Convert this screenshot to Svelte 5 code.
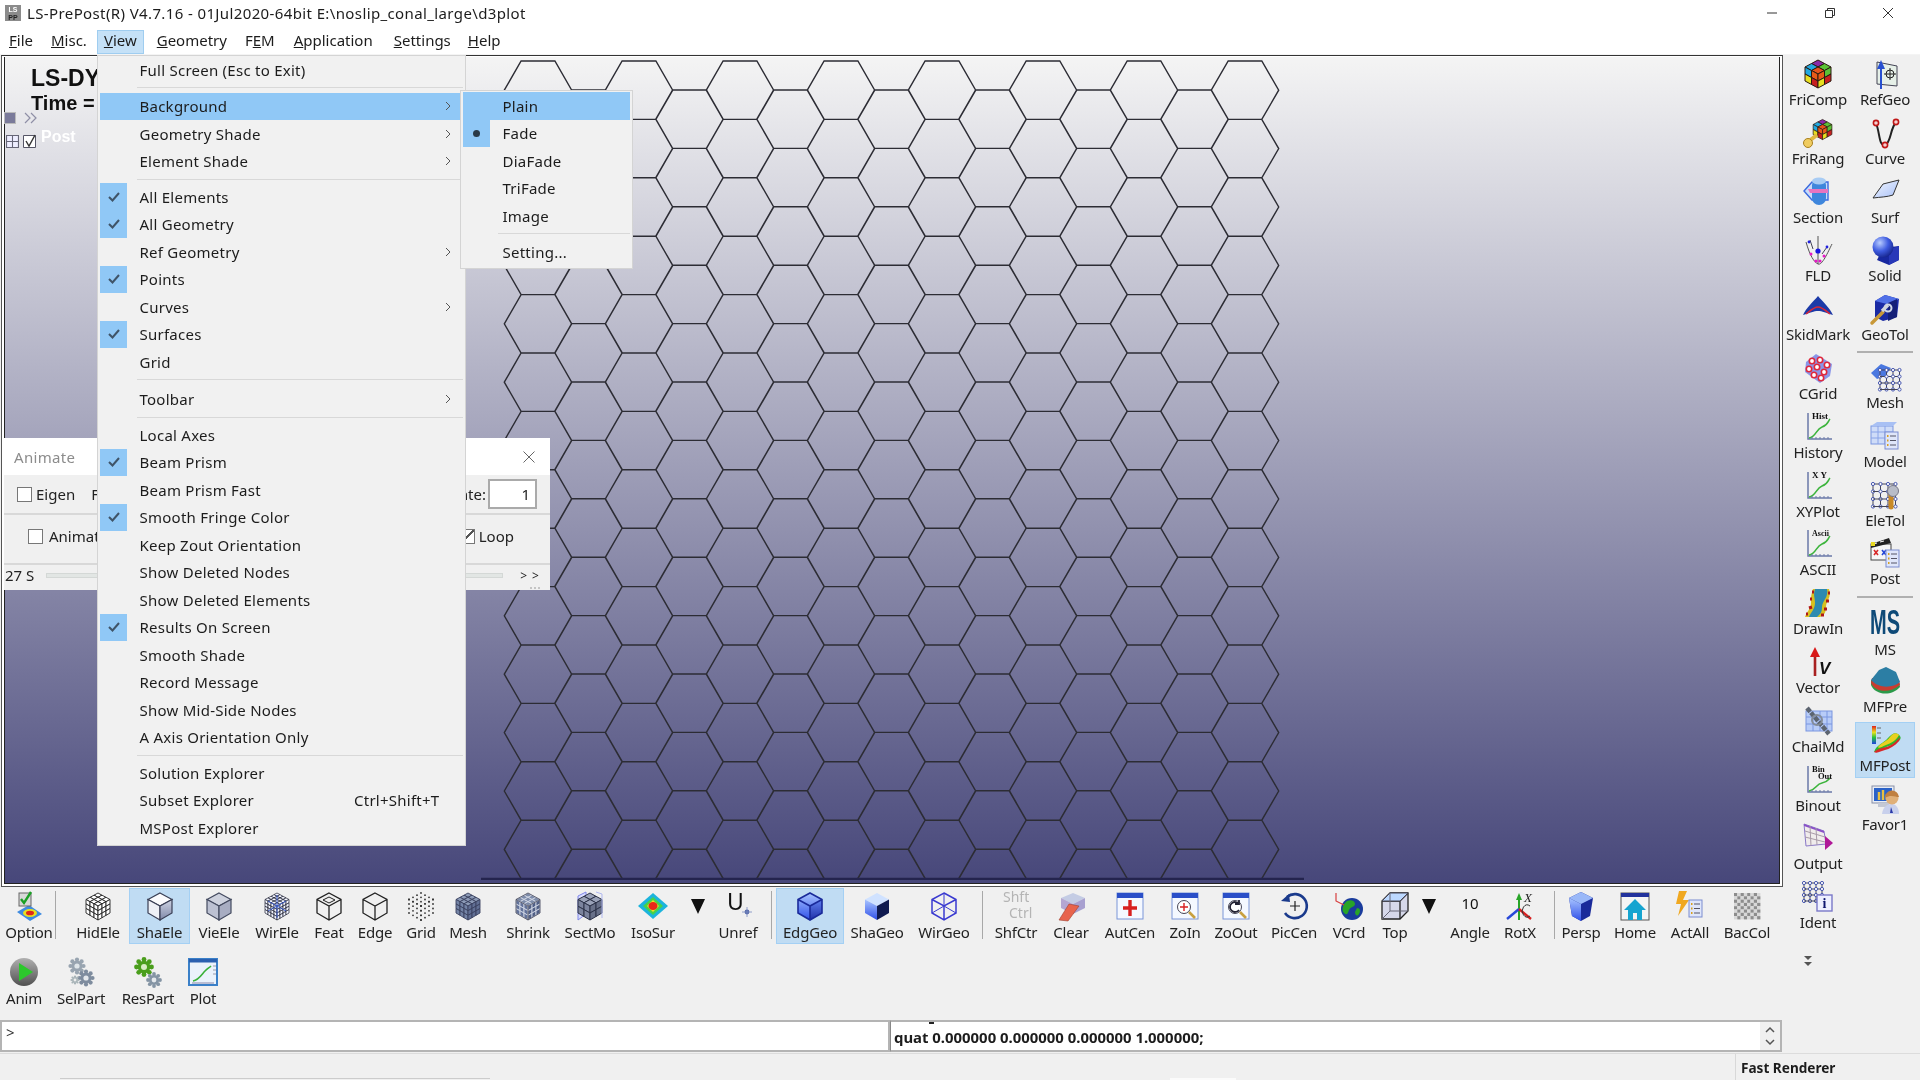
<script>
const lerp=(a,b,t)=>[a[0]+(b[0]-a[0])*t,a[1]+(b[1]-a[1])*t];
const bil=(a,b,c,d,u,v)=>lerp(lerp(a,b,u),lerp(d,c,u),v);
function face(a,b,c,d,n,fills,stroke,sw=1){let s='';for(let i=0;i<n;i++)for(let j=0;j<n;j++){const f=Array.isArray(fills)?fills[(i+j*n)%fills.length]:fills;const p=[bil(a,b,c,d,i/n,j/n),bil(a,b,c,d,(i+1)/n,j/n),bil(a,b,c,d,(i+1)/n,(j+1)/n),bil(a,b,c,d,i/n,(j+1)/n)].map(q=>q[0].toFixed(1)+','+q[1].toFixed(1)).join(' ');s+=`<polygon points="${p}" fill="${f}" stroke="${stroke}" stroke-width="${sw}"/>`;}return s;}
const T=[16,3],R=[28,9.5],C=[16,16],L=[4,9.5],RB=[28,23],B=[16,30],LB=[4,23];
const gridCube=(n,f,st,sw=1)=>face(T,R,C,L,n,f[0],st,sw)+face(L,C,B,LB,n,f[1],st,sw)+face(C,R,RB,B,n,f[2],st,sw);
const cubeLines=(st,sw=1.3)=>`<path d="M16 3 28 9.5V23L16 30 4 23V9.5ZM4 9.5 16 16 28 9.5M16 16V30" fill="none" stroke="${st}" stroke-width="${sw}"/>`;
const win=(inner,bar='#2a4fc8')=>`<rect x="3" y="3" width="26" height="26" fill="#f4f8ff" stroke="#7a96d8"/><rect x="3" y="3" width="26" height="5" fill="${bar}"/>${inner}`;
const plot=(label,size=9)=>`<path d="M6 2V28H30" fill="none" stroke="#6a78a8" stroke-width="1.5"/><path d="M7 27C14 26 14 18 20 16S26 10 28 8" fill="none" stroke="#3cb43c" stroke-width="1.6"/><path d="M10 26v2M14 26v2M18 26v2M22 26v2M26 26v2" stroke="#6a78a8"/><text x="10" y="8" font-family="Liberation Serif,serif" font-weight="700" font-size="${size}" fill="#111">${label}</text>`;
const list=(x,y)=>`<rect x="${x}" y="${y}" width="13" height="17" fill="#dfe6fa" stroke="#7a8cd0"/><path d="M${x+5} ${y+4}h6M${x+5} ${y+8.5}h6M${x+5} ${y+13}h6" stroke="#556"/><path d="M${x+2} ${y+4}h1.5M${x+2} ${y+8.5}h1.5M${x+2} ${y+13}h1.5" stroke="#d8a020" stroke-width="2"/>`;
const gridDots=(x,y,n,s)=>{let o='';for(let i=0;i<=n;i++){o+=`<path d="M${x} ${y+i*s}h${n*s}M${x+i*s} ${y}v${n*s}" stroke="#445"/>`;for(let j=0;j<=n;j++)o+=`<circle cx="${x+i*s}" cy="${y+j*s}" r="1.6" fill="#fff" stroke="#4858b0"/>`;}return o;};
const rubik=(o=0)=>face([16,2+o],[29,9+o],[16,16+o],[3,9+o],2,['#8a2aa8','#5bc236','#22a8e0','#e8541c'],'#2a1a10',1)+face([3,9+o],[16,16+o],[16,30+o],[3,23+o],2,['#20a8e0','#e85a18','#e8e020','#c82020'],'#2a1a10',1)+face([16,16+o],[29,9+o],[29,23+o],[16,30+o],2,['#e85a18','#5bc236','#e8e020','#c82020'],'#2a1a10',1);
const gear=(x,y,r,c,h)=>{let s='';for(let i=0;i<8;i++){const a=i*Math.PI/4;s+=`<circle cx="${(x+Math.cos(a)*r).toFixed(1)}" cy="${(y+Math.sin(a)*r).toFixed(1)}" r="${(r*.32).toFixed(1)}" fill="${c}"/>`;}return s+`<circle cx="${x}" cy="${y}" r="${r*.85}" fill="${c}"/><circle cx="${x}" cy="${y}" r="${r*.4}" fill="${h}"/>`;};
const dots=(()=>{let s='';for(const [a,b,c,d] of [[T,R,C,L],[L,C,B,LB],[C,R,RB,B]])for(let i=0;i<=3;i++)for(let j=0;j<=3;j++){const p=bil(a,b,c,d,i/3,j/3);s+=`<circle cx="${p[0].toFixed(1)}" cy="${p[1].toFixed(1)}" r=".9" fill="#333"/>`;}return s;})();
const icons={
option:`<path d="M4 22 16 15 29 24 17 31Z" fill="#3f8be0"/><ellipse cx="17" cy="23" rx="7" ry="4" fill="#e8e020"/><ellipse cx="17" cy="23" rx="4" ry="2.3" fill="#e02818"/><rect x="6" y="3" width="12" height="13" fill="#d8d8d8" stroke="#666"/><path d="M8 9l3 4 7-11" fill="none" stroke="#1aa024" stroke-width="2.4"/>`,
hidele:gridCube(3,['#fff','#fff','#fff'],'#222',.9),
shaele:gridCube(1,['#fbfbfd','#eef0f6','url(#sh)'],'#3a3f55',1.2),
viele:gridCube(1,['#ced2de','#bcc1d2','#a8adc2'],'#444b60',1.2),
wirele:gridCube(4,['#f4f6ff','#f4f6ff','#f4f6ff'],'#1c2030',.7)+`<path d="M16 5V28M7 11 25 21M25 11 7 21" stroke="#3a5ac8" stroke-width="1"/>`,
feat:cubeLines('#222')+`<path d="M16 7 22 10 16 13 10 10Z" fill="none" stroke="#222"/>`,
edge:cubeLines('#222'),
grid:dots,
mesh:gridCube(3,['#8c9ab6','#7484a6','#616f94'],'#3a4260',.9),
shrink:gridCube(3,['#7d8caa','#62729a','#505f86'],'#d0d6e4',.9)+cubeLines('#334',.7),
sectmo:`<path d="M4 6 12 2V24L4 30Z" fill="#d8dcff" stroke="#8088e8"/>`+gridCube(2,['#9aa2b8','#7c849e','#687088'],'#2c3248')+`<path d="M22 2 28 4V28" fill="none" stroke="#b0b8f0"/>`,
isosur:`<path d="M1 16 16 3 31 16 16 29Z" fill="#1cb4dc"/><path d="M6 16 16 7 26 16 16 25Z" fill="#46d24a"/><path d="M10 16 16 10 22 16 16 22Z" fill="#f0e020"/><ellipse cx="16" cy="16" rx="4.5" ry="4" fill="#e82818"/>`,
drop:`<path d="M9 9H23L16 24Z" fill="#111"/>`,
unref:`<text x="5" y="20" font-family="Noto Sans,sans-serif" font-size="23" fill="#111">U</text><circle cx="25" cy="22" r="2.4" fill="#5468a8"/><path d="M25 17v10M20 22h10" stroke="#7a8ac0" stroke-width=".8"/>`,
edggeo:`<path d="M16 3 28 9.5V23L16 30 4 23V9.5Z" fill="url(#bl)"/><path d="M16 16 28 9.5V23L16 30Z" fill="url(#bd)"/>`+cubeLines('#1a2a9a',1.6),
shageo:`<path d="M4 9.5 16 3 28 9.5 16 16Z" fill="#d0e2ff"/><path d="M4 9.5 16 16V30L4 23Z" fill="url(#bl)"/><path d="M16 16 28 9.5V23L16 30Z" fill="#101a50"/>`,
wirgeo:cubeLines('#3a3ad0',1.5)+`<path d="M4 23 16 16M16 16 28 23M16 3V16" stroke="#3a3ad0" stroke-width="1"/>`,
shfctr:`<text x="3" y="12" font-family="Noto Sans,sans-serif" font-size="14" fill="#b4b4b4">Shft</text><text x="9" y="28" font-family="Noto Sans,sans-serif" font-size="14" fill="#b4b4b4">Ctrl</text>`,
clear:`<path d="M6 8 18 3 30 8 18 14Z" fill="#c4cce4"/><path d="M6 8 18 14V24L6 18Z" fill="#9a86c4" opacity=".7"/><path d="M18 14 30 8V18L18 24Z" fill="#a8a0d0"/><path d="M4 30 14 14 24 16 13 31Z" fill="#e8644c" stroke="#a04030" stroke-width=".6"/>`,
autcen:win(`<path d="M16 10v16M9 18h14" stroke="#d82020" stroke-width="3.4"/>`),
zoin:win(`<circle cx="15" cy="17" r="6.5" fill="#fff" stroke="#445"/><path d="M15 13v8M11 17h8" stroke="#d82020" stroke-width="1.4"/><path d="M20 22l6 6" stroke="#c8a040" stroke-width="2.6"/>`),
zoout:win(`<circle cx="15" cy="17" r="6.5" fill="#fff" stroke="#445"/><path d="M19 14a5 5 0 1 0 0 6M19 10v4h-4" fill="none" stroke="#223" stroke-width="1.8"/><path d="M20 22l6 6" stroke="#c8a040" stroke-width="2.6"/>`),
piccen:`<path d="M9 7a12 12 0 1 1-2 16" fill="none" stroke="#1a3a8c" stroke-width="2.6"/><path d="M3 11 11 4 12 12Z" fill="#1a3a8c"/><path d="M17 11v10M12 16h10" stroke="#222" stroke-width="1.2"/>`,
vcrd:`<circle cx="19" cy="19" r="11" fill="#1a3c9c"/><path d="M14 11c4-2 8 0 8 3s-5 3-6 6-2 6-5 3-1-9 3-12ZM24 18c3 0 4 3 2 6s-4 1-4-2Z" fill="#28a428"/><path d="M3 3v8l8 4M11 15 3 11" fill="none" stroke="#d84040" stroke-width="1.2"/>`,
top:`<path d="M3 11 11 3H29V21L21 29H3Z" fill="#d6d8ea" stroke="#222" stroke-width="1.3"/><path d="M3 11H21V29M21 11 29 3" fill="none" stroke="#222" stroke-width="1.3"/><path d="M3 11 11 3H29L21 11Z" fill="#bcd8ff" stroke="#445"/><path d="M11 3V21H29M11 21 3 29" fill="none" stroke="#667"/>`,
ten:`<text x="16" y="19" text-anchor="middle" font-family="Noto Sans,sans-serif" font-size="15" fill="#111">10</text>`,
rotx:`<path d="M15 30V8" stroke="#28a428" stroke-width="2"/><path d="M15 3l-3 7h6Z" fill="#28a428"/><path d="M15 19 3 29" stroke="#2848d8" stroke-width="2.4"/><path d="M15 19 27 29" stroke="#d82020" stroke-width="2.4"/><text x="20" y="12" font-family="Liberation Serif,serif" font-style="italic" font-size="13" fill="#222">X</text><path d="M26 16a5 6 0 1 0 0 10" fill="none" stroke="#333"/>`,
persp:`<path d="M16 2 28 8 25 26 16 31 7 26 4 8Z" fill="#1a2a9a"/><path d="M4 8 16 2 28 8 16 14Z" fill="#9ab8f8"/><path d="M4 8 16 14V31L7 26Z" fill="url(#bl)"/>`,
home:`<rect x="2" y="3" width="28" height="27" fill="#f4f4f4" stroke="#555"/><rect x="2" y="3" width="28" height="4" fill="#22329c"/><path d="M16 9 5 20H9V30H14V23H18V30H23V20H27Z" fill="#16a4d0"/>`,
actall:`<path d="M13 1H5L2 14H7L4 26 15 10H9Z" fill="#f0a820"/>`+list(15,10),
baccol:(()=>{let s='';for(let i=0;i<8;i++)for(let j=0;j<8;j++)s+=`<rect x="${3+i*3.3}" y="${3+j*3.3}" width="3.3" height="3.3" fill="${(i+j)%2==0?'#8d8d8d':'#d8d8d8'}"/>`;return s;})(),
anim:`<circle cx="16" cy="16" r="14" fill="url(#gb)"/><path d="M11 7 25 16 11 25Z" fill="#2cc82c"/>`,
selpart:gear(12,10,6.5,'#98a4b0','#dfe6ea')+gear(21,22,6.5,'#7e8c9e','#e4e8ec')+gear(10,24,3.5,'#a8b4b8','#eee'),
respart:gear(12,11,7.5,'#4a9e1c','#d8ecc4')+gear(22,24,6,'#8494a4','#e4e8ec'),
plotw:`<rect x="2" y="3" width="28" height="26" fill="#eaf2fb" stroke="#3a80c8" stroke-width="2"/><rect x="2" y="3" width="28" height="3.5" fill="#2a60b0"/><path d="M6 25C12 24 15 18 18 15S22 12 24 10" fill="none" stroke="#38b038" stroke-width="1.6"/><path d="M5 27H27" stroke="#88a"/><path d="M26 10h3M26 14h3M26 18h3" stroke="#99a"/>`,
fricomp:rubik(),
refgeo:`<path d="M8 4 28 8V28L8 26Z" fill="#e6f0e8" stroke="#445"/><path d="M12 31V8" stroke="#2850d0" stroke-width="2"/><path d="M12 2 8 11H16Z" fill="#2850d0"/><circle cx="21" cy="16" r="4" fill="none" stroke="#222"/><path d="M21 10v12M15 16h12" stroke="#222"/>`,
frirang:`<g transform="translate(9 1) scale(.72)">${rubik()}</g><path d="M3 27l12-9" stroke="#e0b840" stroke-width="4"/><circle cx="6" cy="26" r="4.5" fill="#f0cc60" stroke="#a88020"/>`,
curve:`<path d="M7 6C11 16 10 30 16 28S21 12 27 5" fill="none" stroke="#222" stroke-width="2"/><circle cx="7" cy="6" r="2.6" fill="#f4d0d0" stroke="#c01818" stroke-width="1.6"/><circle cx="16" cy="28" r="2.6" fill="#f4d0d0" stroke="#c01818" stroke-width="1.6"/><circle cx="27" cy="5" r="2.6" fill="#f4d0d0" stroke="#c01818" stroke-width="1.6"/>`,
section:`<path d="M2 15 10 6H26V24H10Z" fill="#c8dcfa" stroke="#3a6ae0" stroke-width="1.4"/><rect x="10" y="2" width="14" height="27" rx="7" fill="#3e86dc"/><ellipse cx="17" cy="5" rx="7" ry="3.5" fill="#a8ccf4"/><path d="M6 13H26V17H8Z" fill="#e874c0"/>`,
surf:`<path d="M4 22 14 8 30 4 24 19C18 21 12 21 4 22Z" fill="url(#lb)" stroke="#333"/>`,
fld:`<path d="M16 2V30M4 8C8 22 12 28 16 30S26 18 30 10" fill="none" stroke="#555"/><path d="M8 6l3 9M25 13 20 20" stroke="#445"/><circle cx="16" cy="17" r="2.6" fill="#1818e0"/><circle cx="7" cy="8" r="1.4" fill="#2020e0"/><circle cx="25" cy="13" r="1.4" fill="#2020e0"/><circle cx="9" cy="20" r="1.5" fill="#e818c8"/><circle cx="22" cy="22" r="1.5" fill="#e818c8"/><circle cx="14" cy="27" r="1.6" fill="#e818c8"/><circle cx="18" cy="27" r="1.6" fill="#e818c8"/>`,
solid:`<path d="M14 14 30 12V26L20 31 8 26Z" fill="#1828a0"/><path d="M16 17 30 12V26L20 31V19Z" fill="#2838b8"/><circle cx="14" cy="13" r="10.5" fill="url(#sp)"/>`,
skidmark:`<path d="M16 3C20 8 28 15 31 22 24 20 20 18 16 18S8 20 1 22C4 15 12 8 16 3Z" fill="#1c3aa8"/><path d="M4 21C9 17 12 14 16 14S23 17 28 21" fill="none" stroke="#d82838" stroke-width="1.4"/>`,
geotol:`<path d="M6 8 16 2 30 6 28 24 14 28 6 24Z" fill="#1a2aa4"/><path d="M6 8 16 2 30 6 18 11Z" fill="#5070e8"/><path d="M19 10V28l9-4V6Z" fill="#141f78"/><circle cx="19" cy="15" r="3.5" fill="none" stroke="#d0d8e8" stroke-width="2"/><path d="M3 30 14 19" stroke="#c89838" stroke-width="3.5" stroke-linecap="round"/><path d="M13 18l6-6" stroke="#d0d4de" stroke-width="3.4"/>`,
cgrid:`<path d="M4 10 14 2 30 12 28 24 18 31 3 20Z" fill="#8a96e8"/>`+[[10,9],[18,8],[25,13],[7,17],[15,15],[22,20],[12,23],[19,26]].map(([x,y])=>`<circle cx="${x}" cy="${y}" r="2.7" fill="#fff" stroke="#e0283c" stroke-width="1.6"/>`).join(''),
meshr:`<path d="M2 12 12 3 22 7 16 15 8 18Z" fill="#4a78e0"/>`+gridDots(11,9,3,6.5),
history:plot('Hist'),xyplot:plot('X Y'),ascii:plot('Ascii',8),
model:`<rect x="2" y="6" width="22" height="18" fill="#cfdcf8" stroke="#7a96e0"/><path d="M2 12h22M2 18h22M9 6v18M16 6v18" stroke="#8aa4e8"/><path d="M2 6 8 2H28L24 6Z" fill="#a8c0f4"/>`+list(16,12),
eletol:gridDots(4,5,3,7.5)+`<path d="M22 28V16" stroke="#c88a28" stroke-width="5" stroke-linecap="round"/><circle cx="24" cy="12" r="5.5" fill="#b8bcc8" stroke="#778"/>`,
post:`<rect x="2" y="7" width="20" height="16" fill="#f6f6f6" stroke="#444"/><path d="M2 7 20 1l2 5-20 5Z" fill="#222"/><path d="M4 7l4-1M11 5l4-1" stroke="#fff"/><rect x="2" y="5" width="4" height="4" fill="#e8d820"/><path d="M5 13l4 5M9 13l-4 5" stroke="#d82828" stroke-width="1.6"/><path d="M13 13l4 5M17 13l-4 5" stroke="#2848d8" stroke-width="1.6"/>`+list(17,13),
drawin:`<path d="M11 2H27C30 10 24 14 24 20S22 28 18 30H3C5 24 9 22 9 16S9 8 11 2Z" fill="#d8c020"/><path d="M13 2H25C27 10 20 14 20 20S18 27 15 30H7C9 25 13 22 13 16S11 9 13 2Z" fill="#2d8ab0"/><path d="M12 5l-2 0M10 12l-2 0M10 20l-3 1M6 27l-2 0M26 6h2M24 14h3M22 22h3M19 28h3" stroke="#b01818" stroke-width="3"/>`,
ms:`<text x="16" y="28" text-anchor="middle" font-family="Liberation Sans,sans-serif" font-weight="700" font-size="35" textLength="30" lengthAdjust="spacingAndGlyphs" fill="#0e4a78">MS</text>`,
vector:`<path d="M13 30V8" stroke="#a82020" stroke-width="2.6"/><path d="M13 1 8 11H18Z" fill="#d81818"/><text x="17" y="28" font-family="Liberation Sans,sans-serif" font-style="italic" font-weight="700" font-size="17" fill="#111">V</text>`,
mfpre:`<path d="M2 20C6 30 22 32 31 22L30 17 2 15Z" fill="#2c9a4a"/><path d="M2 18C6 27 20 29 31 20L30 15 3 13Z" fill="#c83c30"/><path d="M2 15 10 5 17 2 27 7 31 17C24 23 10 24 2 15Z" fill="#2c7ea4"/>`,
chaimd:`<rect x="4" y="6" width="26" height="20" fill="#b8ccf8" stroke="#7a96e0"/><path d="M4 12h26M4 19h26M11 6v20M18 6v20M25 6v20" stroke="#7a96e0"/><path d="M5 3 27 29" stroke="#5c6470" stroke-width="4.5" stroke-dasharray="5 1"/><circle cx="15" cy="15" r="5" fill="none" stroke="#848c98" stroke-width="2"/>`,
mfpost:`<rect x="3" y="2" width="4" height="18" fill="url(#rain)"/><path d="M8 4h4M8 9h4M8 14h4" stroke="#666"/><path d="M5 28C8 20 14 20 19 14S28 8 31 12 26 20 20 22 9 28 5 28Z" fill="#2cb82c"/><path d="M9 23C13 18 17 18 21 13S28 9 30 11C27 17 22 19 17 21S10 25 9 23Z" fill="#e8d020"/><path d="M5 28C9 24 15 24 20 22S28 16 31 13L30 17C26 22 20 25 16 26S8 30 5 28Z" fill="#d82828"/>`,
output:`<path d="M2 2 22 9 24 22 4 24Z" fill="#f0ecec" stroke="#8a78c8"/><path d="M2 2 22 9 22 11 2 4Z" fill="#8a50c8"/><path d="M3 9 23 15M3 15 23 20M8 4 9 24M14 6 15 23" stroke="#a89aa8"/><path d="M23 14 31 21 23 28Z" fill="#b01898"/>`,
favor1:`<rect x="3" y="3" width="22" height="17" fill="#e8ecf4" stroke="#8890a8"/><rect x="5" y="5" width="18" height="13" fill="#2a62c8"/><path d="M10 17V9M14 17V7M18 17V11" stroke="#e8c040" stroke-width="2.4"/><path d="M9 20v4H20v-4Z" fill="#c4c8d4"/><path d="M13 31C14 22 20 21 23 21S30 24 30 31Z" fill="#c8d0ec"/><path d="M22 24 24 30 21 30Z" fill="#2838a8"/><circle cx="23" cy="15" r="6.5" fill="#e0b078"/><path d="M16 15a7 7 0 0 1 14-1C26 14 22 11 16 15Z" fill="#c08040"/>`,
ident:gridDots(2,2,3,6)+`<rect x="15" y="14" width="15" height="16" fill="#eef0ff" stroke="#7a78c8" stroke-width="1.4"/><text x="22.5" y="27" text-anchor="middle" font-family="Liberation Serif,serif" font-weight="700" font-size="14" fill="#101870">i</text>`,
binout:`<path d="M6 2V28H30" fill="none" stroke="#6a78a8" stroke-width="1.5"/><path d="M7 27C14 26 14 20 20 19S26 16 28 14" fill="none" stroke="#3cb43c" stroke-width="1.6"/><path d="M10 26v2M14 26v2M18 26v2M22 26v2M26 26v2" stroke="#6a78a8"/><text x="10" y="8" font-family="Liberation Serif,serif" font-weight="700" font-size="8.5" fill="#111">Bin</text><text x="16" y="15" font-family="Liberation Serif,serif" font-weight="700" font-size="8.5" fill="#111">Out</text>`,
};
const place=(rows)=>{let prev=0;return rows.map(it=>{const w=it.w??40;const ml=it.c-w/2-prev;prev=it.c+w/2;return {...it,w,ml};});};
const row1=place([
{c:29,i:'option',l:'Option'},{c:55,w:1,sep:1},{c:98,i:'hidele',l:'HidEle'},{c:159.5,w:61,i:'shaele',l:'ShaEle',on:1},{c:219,i:'viele',l:'VieEle'},{c:277,i:'wirele',l:'WirEle'},{c:329,i:'feat',l:'Feat'},{c:375,i:'edge',l:'Edge'},{c:421,i:'grid',l:'Grid'},{c:468,i:'mesh',l:'Mesh'},{c:528,i:'shrink',l:'Shrink'},{c:590,i:'sectmo',l:'SectMo'},{c:653,i:'isosur',l:'IsoSur'},{c:698,w:20,i:'drop',l:''},{c:738,i:'unref',l:'Unref'},{c:771,w:1,sep:1},{c:810,w:68,i:'edggeo',l:'EdgGeo',on:1},{c:877,i:'shageo',l:'ShaGeo'},{c:944,i:'wirgeo',l:'WirGeo'},{c:982,w:1,sep:1},{c:1016,i:'shfctr',l:'ShfCtr'},{c:1071,i:'clear',l:'Clear'},{c:1130,i:'autcen',l:'AutCen'},{c:1185,i:'zoin',l:'ZoIn'},{c:1236,i:'zoout',l:'ZoOut'},{c:1294,i:'piccen',l:'PicCen'},{c:1349,i:'vcrd',l:'VCrd'},{c:1395,i:'top',l:'Top'},{c:1429,w:20,i:'drop',l:''},{c:1470,i:'ten',l:'Angle'},{c:1520,i:'rotx',l:'RotX'},{c:1554,w:1,sep:1},{c:1581,i:'persp',l:'Persp'},{c:1635,i:'home',l:'Home'},{c:1690,i:'actall',l:'ActAll'},{c:1747,i:'baccol',l:'BacCol'}]);
const row2=place([{c:24,i:'anim',l:'Anim'},{c:81,i:'selpart',l:'SelPart'},{c:148,i:'respart',l:'ResPart'},{c:203,i:'plotw',l:'Plot'}]);
const colL=[['fricomp','FriComp'],['frirang','FriRang'],['section','Section'],['fld','FLD'],['skidmark','SkidMark'],['cgrid','CGrid'],['history','History'],['xyplot','XYPlot'],['ascii','ASCII'],['drawin','DrawIn'],['vector','Vector'],['chaimd','ChaiMd'],['binout','Binout'],['output','Output'],['ident','Ident']];
const colR1=[['refgeo','RefGeo'],['curve','Curve'],['surf','Surf'],['solid','Solid'],['geotol','GeoTol']];
const colR2=[['meshr','Mesh'],['model','Model'],['eletol','EleTol'],['post','Post']];
const menu=[{l:'Full Screen (Esc to Exit)'},{s:9},{l:'Background',a:1,on:1},{l:'Geometry Shade',a:1},{l:'Element Shade',a:1},{s:8},{l:'All Elements',c:1},{l:'All Geometry',c:1},{l:'Ref Geometry',a:1},{l:'Points',c:1},{l:'Curves',a:1},{l:'Surfaces',c:1},{l:'Grid'},{s:10},{l:'Toolbar',a:1},{s:8},{l:'Local Axes'},{l:'Beam Prism',c:1},{l:'Beam Prism Fast'},{l:'Smooth Fringe Color',c:1},{l:'Keep Zout Orientation'},{l:'Show Deleted Nodes'},{l:'Show Deleted Elements'},{l:'Results On Screen',c:1},{l:'Smooth Shade'},{l:'Record Message'},{l:'Show Mid-Side Nodes'},{l:'A Axis Orientation Only'},{s:8},{l:'Solution Explorer'},{l:'Subset Explorer',k:'Ctrl+Shift+T'},{l:'MSPost Explorer'}];
const bars=[['File','F','ile'],['Misc.','M','isc.'],['View','V','iew'],['Geometry','G','eometry'],['FEM','F','EM',1],['Application','A','pplication'],['Settings','S','ettings'],['Help','H','elp']];
const Rh=33.7,H=29.2;let hexPath='';
for(let i=0;i<15;i++){const cx=537+50.5*i;const odd=i%2==1;for(let k=0;k<14;k++){const cy=(odd?120.2:91.2)+58.4*k;hexPath+=`M${(cx-Rh).toFixed(1)} ${cy.toFixed(1)}L${(cx-Rh/2).toFixed(1)} ${(cy-H).toFixed(1)}H${(cx+Rh/2).toFixed(1)}L${(cx+Rh).toFixed(1)} ${cy.toFixed(1)}L${(cx+Rh/2).toFixed(1)} ${(cy+H).toFixed(1)}H${(cx-Rh/2).toFixed(1)}Z`;}}
</script>

<svg class="defs" width="0" height="0" aria-hidden="true"><defs>
<linearGradient id="sh" x1="0" y1="0" x2="0" y2="1"><stop offset="0" stop-color="#cfd4e4"/><stop offset="1" stop-color="#7f88a8"/></linearGradient>
<linearGradient id="bl" x1="0" y1="0" x2="0" y2="1"><stop offset="0" stop-color="#a8c4ff"/><stop offset="1" stop-color="#3050e8"/></linearGradient>
<linearGradient id="bd" x1="0" y1="0" x2="0" y2="1"><stop offset="0" stop-color="#6080f0"/><stop offset="1" stop-color="#2030a8"/></linearGradient>
<linearGradient id="lb" x1="0" y1="0" x2="1" y2="1"><stop offset="0" stop-color="#f4f8ff"/><stop offset="1" stop-color="#a8c0f8"/></linearGradient>
<linearGradient id="gb" x1="0" y1="0" x2="0" y2="1"><stop offset="0" stop-color="#b0b0b0"/><stop offset="1" stop-color="#505050"/></linearGradient>
<linearGradient id="rain" x1="0" y1="0" x2="0" y2="1"><stop offset="0" stop-color="#e02020"/><stop offset=".35" stop-color="#e8e020"/><stop offset=".65" stop-color="#20c040"/><stop offset="1" stop-color="#2040e0"/></linearGradient>
<radialGradient id="sp" cx=".35" cy=".3" r=".8"><stop offset="0" stop-color="#b8ccff"/><stop offset=".5" stop-color="#3f5ce0"/><stop offset="1" stop-color="#101c80"/></radialGradient>
</defs></svg>

<div class="app">
  <header class="title">
    <svg class="appicon" viewBox="0 0 16 16"><rect width="16" height="16" fill="#8b8b8b"/><text x="8" y="7" text-anchor="middle" font-family="Liberation Sans,sans-serif" font-size="7" font-weight="700" fill="#fff">LS</text><text x="8" y="14.5" text-anchor="middle" font-family="Liberation Sans,sans-serif" font-size="7" font-weight="700" fill="#222">PP</text></svg>
    <span class="ttext">LS-PrePost(R) V4.7.16 - 01Jul2020-64bit E:\noslip_conal_large\d3plot</span>
    <div class="winbtns">
      <svg viewBox="0 0 12 12"><path d="M1 6h10" stroke="#333"/></svg>
      <svg viewBox="0 0 12 12"><path d="M1.5 3.5h7v7h-7zM3.5 3.5v-2h7v7h-2" fill="none" stroke="#333"/></svg>
      <svg viewBox="0 0 12 12"><path d="M1 1l10 10M11 1 1 11" stroke="#333"/></svg>
    </div>
  </header>
  <nav class="bar">
    {#each bars as b, i}
      <span class="mi m{i}" class:open={i===2}>{#if b[3]}F<u>E</u>M{:else}<u>{b[1]}</u>{b[2]}{/if}</span>
    {/each}
  </nav>
  <main class="main">
    <div class="left">
      <section class="frame">
        <div class="canvas">
          <svg class="hex" viewBox="4 58 1774 823" width="1774" height="823"><path d={hexPath} fill="none" stroke="#2c2c34" stroke-width="1.4"/><path d="M480 880H1303" stroke="#24244e" stroke-width="2.4"/></svg>
        </div>
      </section>
      <div class="tools first">
        {#each row1 as t}
          {#if t.sep}<div class="tsep" style="margin-left:{t.ml}px"></div>
          {:else}<div class="tool" class:on={t.on} style="width:{t.w}px;margin-left:{t.ml}px"><svg viewBox="0 0 32 32" class="ic">{@html icons[t.i]}</svg><span>{t.l}</span></div>{/if}
        {/each}
      </div>
      <div class="tools second">
        {#each row2 as t}
          <div class="tool" style="width:{t.w}px;margin-left:{t.ml}px"><svg viewBox="0 0 32 32" class="ic">{@html icons[t.i]}</svg><span>{t.l}</span></div>
        {/each}
      </div>
      <div class="cmd">
        <div class="inp">&gt;</div>
        <div class="out"><i class="cut"></i><b>quat 0.000000 0.000000 0.000000 1.000000;</b>
          <div class="spin"><svg viewBox="0 0 12 24" width="12" height="24"><path d="M2 8l4-4 4 4M2 16l4 4 4-4" fill="none" stroke="#555" stroke-width="1.5"/></svg></div>
        </div>
      </div>
    </div>
    <aside class="side">
      <div class="col">
        {#each colL as c}<div class="tool st"><svg viewBox="0 0 32 32" class="ic">{@html icons[c[0]]}</svg><span>{c[1]}</span></div>{/each}
        <svg class="more" viewBox="0 0 12 12" width="12" height="12"><path d="M2 1h8L6 5ZM2 7h8L6 11Z" fill="#555"/></svg>
      </div>
      <div class="col">
        {#each colR1 as c}<div class="tool st"><svg viewBox="0 0 32 32" class="ic">{@html icons[c[0]]}</svg><span>{c[1]}</span></div>{/each}
        <div class="ssep a"></div>
        {#each colR2 as c}<div class="tool st"><svg viewBox="0 0 32 32" class="ic">{@html icons[c[0]]}</svg><span>{c[1]}</span></div>{/each}
        <div class="ssep b"></div>
        <div class="tool st msi"><svg viewBox="0 0 32 32" class="ic">{@html icons.ms}</svg><span>MS</span></div>
        <div class="tool st"><svg viewBox="0 0 32 32" class="ic">{@html icons.mfpre}</svg><span>MFPre</span></div>
        <div class="tool st on"><svg viewBox="0 0 32 32" class="ic">{@html icons.mfpost}</svg><span>MFPost</span></div>
        <div class="tool st"><svg viewBox="0 0 32 32" class="ic">{@html icons.favor1}</svg><span>Favor1</span></div>
      </div>
    </aside>
  </main>
  <footer class="status">
    <i class="ghost g1"></i><i class="ghost g2"></i>
    <b class="fast">Fast Renderer</b>
  </footer>

  <div class="overlay-text">
    <div class="ls">LS-DYNA</div>
    <div class="time">Time =</div>
  </div>
  <div class="tree">
    <div class="trow"><i class="sq"></i><svg class="chev" viewBox="0 0 14 12" width="14" height="12"><path d="M1 1l5 5-5 5M7 1l5 5-5 5" fill="none" stroke="#8f8fa6" stroke-width="1.2"/></svg></div>
    <div class="trow two"><svg viewBox="0 0 12 12" width="13" height="13"><path d="M.5.5h11v11H.5zM6 .5v11M.5 6h11" fill="#eef" stroke="#667"/></svg><svg viewBox="0 0 14 14" width="14" height="14"><path d="M.5 1.5h12v12H.5z" fill="#fff" stroke="#556"/><path d="M3 7l3 5 6-11" fill="none" stroke="#333" stroke-width="1.4"/></svg><b>Post</b></div>
  </div>

  <div class="dialog">
    <div class="dtitle"><span>Animate</span><svg viewBox="0 0 12 12" width="12" height="12"><path d="M.5.5l11 11M11.5.5l-11 11" stroke="#666"/></svg></div>
    <div class="drow r1"><div class="lgrp"><i class="cb"></i><span>Eigen</span><span class="f">Fringe</span></div><div class="rgrp"><span>Rate:</span><div class="num">1</div></div></div>
    <div class="drow r2"><div class="lgrp"><i class="cb"></i><span>Animate</span></div><div class="rgrp"><i class="cb on"></i><span>Loop</span></div></div>
    <div class="drow r3"><span>27 S</span><div class="slider"></div><span class="ff">&gt; &gt;</span></div>
    <i class="grip"></i>
  </div>

  <div class="menu">
    {#each menu as m}
      {#if m.s}<div class="msep" style="height:{m.s}px"></div>
      {:else}<div class="item" class:hl={m.on}>
        <span class="chk" class:checked={m.c}>{#if m.c}<svg viewBox="0 0 14 12" width="14" height="12"><path d="M2 6l3.5 3.5L12 2" fill="none" stroke="#3f5468" stroke-width="2"/></svg>{/if}</span>
        <span class="lab">{m.l}</span>
        {#if m.k}<span class="key">{m.k}</span>{/if}
        {#if m.a}<svg class="arr" viewBox="0 0 6 10" width="6" height="10"><path d="M1 1l4 4-4 4" fill="none" stroke="#555"/></svg>{/if}
      </div>{/if}
    {/each}
  </div>
  <div class="submenu">
    <div class="item hl"><span class="chk"></span><span class="lab">Plain</span></div>
    <div class="item"><span class="chk checked"><i class="dot"></i></span><span class="lab">Fade</span></div>
    <div class="item"><span class="chk"></span><span class="lab">DiaFade</span></div>
    <div class="item"><span class="chk"></span><span class="lab">TriFade</span></div>
    <div class="item"><span class="chk"></span><span class="lab">Image</span></div>
    <div class="msep sub"></div>
    <div class="item"><span class="chk"></span><span class="lab">Setting...</span></div>
  </div>
</div>

<style>
:global(body){margin:0;background:#f0f0f0}
.defs{position:absolute}
.app{position:relative;width:1920px;height:1080px;overflow:hidden;background:#f0f0f0;font-family:"Noto Sans",sans-serif;font-size:15px;color:#1c1c1c;filter:blur(.4px)}
.title{height:29px;background:#fff;display:flex;align-items:center;padding:0 0 3px 5px;box-sizing:border-box}
.appicon{width:16px;height:16px;margin-right:6px}
.ttext{font-size:15px;letter-spacing:.38px;white-space:nowrap}
.winbtns{margin-left:auto;display:flex;gap:46px;padding-right:26px}
.winbtns svg{width:12px;height:12px}
.bar{height:26px;background:#fff;border-bottom:1px solid #f4f4f4;box-sizing:border-box;display:flex;align-items:flex-end}
.mi{white-space:nowrap;padding:0 6px 3px;line-height:21px}
.m0{margin-left:3px}.m1{margin-left:6px}.m2{margin-left:4px;padding:0 7px 3px}.m3{margin-left:7px}.m4{margin-left:6px}.m5{margin-left:7px}.m6{margin-left:9px}.m7{margin-left:5px}
.open{background:#c5e1f7;box-shadow:inset 0 0 0 1px #9fcdf0}
.main{display:flex;height:998px}
.left{width:1784px;flex:none}
.frame{height:832px;box-sizing:border-box;border:1px solid #555;border-top-color:#333;padding:1px 2px 2px;margin-left:1px;width:1782px;background:#fff}
.canvas{position:relative;height:826px;border:1px solid #222;border-top:0;overflow:hidden;background:linear-gradient(#f4f4f4,#47477a)}
.hex{display:block}
.tools{display:flex;height:56px;align-items:flex-start}
.first{margin-top:1px}
.second{margin-top:10px}
.tool{display:flex;flex-direction:column;align-items:center;flex:none;height:56px;box-sizing:border-box;padding-top:2px}
.tool span{line-height:18px;margin-top:1px;white-space:nowrap;font-size:15px;letter-spacing:-.2px;color:#222}
.tool.on{background:#c0dcf3;box-shadow:inset 0 0 0 1px #a4d0f4}
.ic{width:32px;height:32px;flex:none;display:block;overflow:visible}
.tsep{width:1px;height:48px;margin-top:3px;background:#a8a8a8;flex:none}
.cmd{display:flex;margin-top:10px;height:32px;width:1782px}
.inp{width:890px;box-sizing:border-box;border:2px solid #b4b4b4;background:#fff;padding-left:4px;font-size:15px;line-height:20px;color:#333}
.out{position:relative;flex:1;box-sizing:border-box;border:2px solid #b4b4b4;border-left:1px solid #888;background:#fff;padding-left:3px;line-height:28px;font-size:14.9px;white-space:nowrap;overflow:hidden}
.out b{position:relative;top:1px}
.cut{position:absolute;left:38px;top:0;width:5px;height:2px;background:#222}
.spin{position:absolute;right:0;top:0;bottom:0;width:20px;background:#f0f0f0;display:flex;align-items:center;justify-content:center}
.side{flex:1;display:flex;padding-top:1px}
.col{width:66px;display:flex;flex-direction:column;align-items:center;margin-left:1px}
.col+.col{margin-left:1px;width:66px}
.st{width:60px;margin-bottom:2.8px}
.st span{margin-top:0}
.msi span{position:relative;top:2px}
.more{margin-top:17px;margin-left:-20px}
.ssep{width:56px;height:2px;background:#b0b0b0;flex:none}
.ssep.a{margin:1px 0 6px}
.ssep.b{margin:2px 0 6px}
.status{position:relative;flex:1;height:27px;box-sizing:border-box;border-top:1px solid #dcdcdc}
.fast{position:absolute;left:1735px;top:0;height:26px;line-height:27px;border-left:1px solid #d8d8d8;padding-left:5px;font-size:13.6px}
.ghost{position:absolute;top:24px;height:3px;border-top:1px solid #ccc}
.g1{left:60px;width:430px}.g2{left:1170px;width:66px;border-top:2px solid #fbfbfb}
.overlay-text{position:absolute;left:31px;top:64px;font-family:"Liberation Sans",sans-serif;font-weight:700;color:#111}
.ls{font-size:23px;line-height:28px}
.time{font-size:20px;line-height:22px}
.tree{position:absolute;left:4px;top:110px}
.trow{display:flex;align-items:center;gap:4px;height:16px}
.two{margin-top:7px;padding-left:2px}
.two b{color:#fff;font-family:"Liberation Sans",sans-serif;font-size:16px;position:relative;top:-4px}
.sq{width:12px;height:12px;background:#7a7a9a;border:1px solid #bbb;box-sizing:border-box;display:block}
.chev{margin-left:4px}
.dialog{position:absolute;left:4px;top:438px;width:546px;height:152px;background:#f0f0f0;box-sizing:border-box}
.dtitle{height:37px;background:#fff;display:flex;align-items:center;justify-content:space-between;padding:0 15px 0 10px;color:#8c8c8c;font-size:15px;letter-spacing:.3px}
.drow{display:flex;align-items:center;font-size:15px;color:#222}
.r1{height:40px;justify-content:space-between;padding:0 13px;border-bottom:2px solid #d8d8d8;box-sizing:border-box}
.r2{height:50px;justify-content:space-between;padding:0 36px 6px 24px;border-bottom:2px solid #d8d8d8;box-sizing:border-box}
.r2 .lgrp{gap:6px}
.r3{height:20px;padding:0 10px 0 1px}
.lgrp,.rgrp{display:flex;align-items:center;gap:4px;white-space:nowrap}
.f{margin-left:12px}
.cb{width:15px;height:15px;box-sizing:border-box;border:1.5px solid #777;background:#fff;display:block}
.cb.on{background:linear-gradient(135deg,#fff 46%,#555 46%,#555 54%,#fff 54%)}
.num{width:49px;height:30px;box-sizing:border-box;border:2px solid #aaa;background:#fff;text-align:right;padding-right:5px;line-height:26px;margin-left:-2px}
.slider{width:457px;height:5px;margin-left:12px;background:#e2e6e4;border:1px solid #d4d8d6;box-sizing:border-box}
.ff{margin-left:auto;font-size:12px;letter-spacing:1px}
.grip{position:absolute;right:8px;bottom:1px;width:12px;height:2px;background:repeating-linear-gradient(90deg,#c4c4c4 0 2px,transparent 2px 4px)}
.menu{position:absolute;left:97px;top:55px;width:369px;height:791px;box-sizing:border-box;background:#f1f1f1;border:1px solid #d4d4d4;padding:0 2px}
.submenu{position:absolute;left:460px;top:90px;width:173px;height:179px;box-sizing:border-box;background:#f1f1f1;border:1px solid #d4d4d4;padding:1px 2px}
.item{height:27.5px;display:flex;align-items:center;white-space:nowrap;font-size:15px;letter-spacing:.25px}
.hl{background:#90c8f6}
.chk{width:27px;height:27.5px;flex:none;display:flex;align-items:center;justify-content:center}
.checked{background:#90c8f6}
.lab{margin-left:12.5px}
.key{position:absolute;left:256px}
.arr{position:absolute;left:347px}
.msep{height:9px;margin-left:37px;position:relative}
.msep::after{content:"";position:absolute;left:0;right:0;top:3.5px;height:1px;background:#d8d8d8}
.msep.sub{margin-left:35px}
.dot{width:7px;height:7px;border-radius:50%;background:#2a3a48;display:block}
</style>
